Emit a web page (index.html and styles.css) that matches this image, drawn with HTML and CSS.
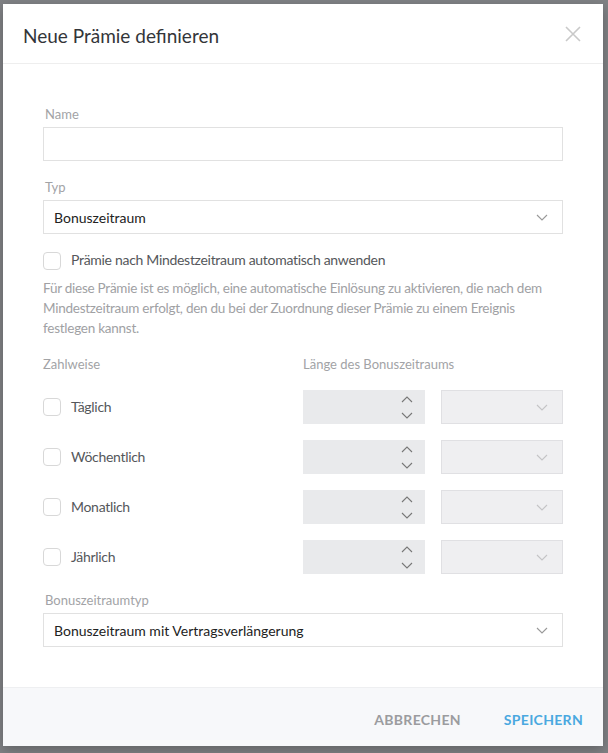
FILE: index.html
```html
<!DOCTYPE html>
<html lang="de">
<head>
<meta charset="utf-8">
<title>Neue Prämie definieren</title>
<link rel="stylesheet" href="styles.css">
</head>
<body>
<div class="modal">
  <div class="modal-header">
    <h1 class="modal-title">Neue Prämie definieren</h1>
    <button class="close" aria-label="Schließen">
      <svg width="16" height="16" viewBox="0 0 16 16"><path d="M1 1L15 15M15 1L1 15" stroke="#c9c9c9" stroke-width="1.6" fill="none"/></svg>
    </button>
  </div>
  <div class="modal-body">
    <label class="field-label">Name</label>
    <div class="input"></div>

    <label class="field-label gap">Typ</label>
    <div class="input select"><span>Bonuszeitraum</span><svg class="chev" width="12" height="7" viewBox="0 0 12 7"><path d="M1 1L6 6L11 1" stroke="#999" stroke-width="1.1" fill="none"/></svg></div>

    <div class="check-row top-check"><span class="box"></span><span class="check-text">Prämie nach Mindestzeitraum automatisch anwenden</span></div>
    <p class="desc">Für diese Prämie ist es möglich, eine automatische Einlösung zu aktivieren, die nach dem Mindestzeitraum erfolgt, den du bei der Zuordnung dieser Prämie zu einem Ereignis festlegen kannst.</p>

    <div class="grid">
      <div class="field-label">Zahlweise</div>
      <div class="field-label span2">Länge des Bonuszeitraums</div>

      <div class="check-row"><span class="box"></span><span class="check-text">Täglich</span></div>
      <div class="num"><span class="spin"><svg width="12" height="7" viewBox="0 0 12 7"><path d="M1 6L6 1L11 6" stroke="#777" stroke-width="1.1" fill="none"/></svg><svg width="12" height="7" viewBox="0 0 12 7"><path d="M1 1L6 6L11 1" stroke="#777" stroke-width="1.1" fill="none"/></svg></span></div>
      <div class="dis-select"><svg class="chev" width="12" height="7" viewBox="0 0 12 7"><path d="M1 1L6 6L11 1" stroke="#c4c4c6" stroke-width="1.1" fill="none"/></svg></div>

      <div class="check-row"><span class="box"></span><span class="check-text">Wöchentlich</span></div>
      <div class="num"><span class="spin"><svg width="12" height="7" viewBox="0 0 12 7"><path d="M1 6L6 1L11 6" stroke="#777" stroke-width="1.1" fill="none"/></svg><svg width="12" height="7" viewBox="0 0 12 7"><path d="M1 1L6 6L11 1" stroke="#777" stroke-width="1.1" fill="none"/></svg></span></div>
      <div class="dis-select"><svg class="chev" width="12" height="7" viewBox="0 0 12 7"><path d="M1 1L6 6L11 1" stroke="#c4c4c6" stroke-width="1.1" fill="none"/></svg></div>

      <div class="check-row"><span class="box"></span><span class="check-text">Monatlich</span></div>
      <div class="num"><span class="spin"><svg width="12" height="7" viewBox="0 0 12 7"><path d="M1 6L6 1L11 6" stroke="#777" stroke-width="1.1" fill="none"/></svg><svg width="12" height="7" viewBox="0 0 12 7"><path d="M1 1L6 6L11 1" stroke="#777" stroke-width="1.1" fill="none"/></svg></span></div>
      <div class="dis-select"><svg class="chev" width="12" height="7" viewBox="0 0 12 7"><path d="M1 1L6 6L11 1" stroke="#c4c4c6" stroke-width="1.1" fill="none"/></svg></div>

      <div class="check-row"><span class="box"></span><span class="check-text">Jährlich</span></div>
      <div class="num"><span class="spin"><svg width="12" height="7" viewBox="0 0 12 7"><path d="M1 6L6 1L11 6" stroke="#777" stroke-width="1.1" fill="none"/></svg><svg width="12" height="7" viewBox="0 0 12 7"><path d="M1 1L6 6L11 1" stroke="#777" stroke-width="1.1" fill="none"/></svg></span></div>
      <div class="dis-select"><svg class="chev" width="12" height="7" viewBox="0 0 12 7"><path d="M1 1L6 6L11 1" stroke="#c4c4c6" stroke-width="1.1" fill="none"/></svg></div>
    </div>

    <label class="field-label gap">Bonuszeitraumtyp</label>
    <div class="input select"><span>Bonuszeitraum mit Vertragsverlängerung</span><svg class="chev" width="12" height="7" viewBox="0 0 12 7"><path d="M1 1L6 6L11 1" stroke="#999" stroke-width="1.1" fill="none"/></svg></div>
  </div>
  <div class="modal-footer">
    <button class="btn cancel">Abbrechen</button>
    <button class="btn save">Speichern</button>
  </div>
</div>
</body>
</html>
```

FILE: styles.css
```css
* { box-sizing: border-box; }
html, body { margin: 0; padding: 0; }
body {
  background: #808285;
  font-family: "Lato", "Noto Sans", sans-serif;
  height: 753px;
  overflow: hidden;
}
.modal {
  margin: 4px 0 0 3px;
  width: 600px;
  height: 742px;
  background: #fff;
  display: flex;
  flex-direction: column;
  box-shadow: 0 4px 12px rgba(0,0,0,0.25);
}
.modal-header {
  display: flex;
  align-items: center;
  justify-content: space-between;
  height: 60px;
  padding: 4px 22px 0 20px;
  border-bottom: 1px solid #eeeeee;
}
.modal-title {
  margin: 0;
  font-size: 19px;
  font-weight: 400;
  color: #333539;
}
.close {
  border: 0;
  background: none;
  padding: 0;
  width: 16px;
  height: 16px;
  margin-top: -4px;
  display: flex;
}
.modal-body {
  flex: 1;
  padding: 41px 40px 0 40px;
  display: flex;
  flex-direction: column;
}
.field-label {
  display: block;
  font-size: 13px;
  line-height: 18px;
  color: #a2a3a6;
  padding-left: 2px;
  margin-bottom: 4px;
}
.field-label.gap { margin-top: 17px; }
.input {
  height: 34px;
  border: 1px solid #e1e1e1;
  background: #fff;
}
.select {
  display: flex;
  align-items: center;
  justify-content: space-between;
  padding: 0 14px 0 10px;
  font-size: 14px;
  color: #222;
}
.check-row {
  display: flex;
  align-items: center;
  gap: 10px;
  height: 18px;
}
.top-check { margin-top: 18px; }
.box {
  width: 18px;
  height: 18px;
  border: 1px solid #d8d8d8;
  border-radius: 4px;
  background: #fff;
  flex: none;
}
.check-text {
  font-size: 14px;
  line-height: 18px;
  letter-spacing: -0.3px;
  color: #55575b;
}
.top-check .check-text { margin-top: -2px; }
.desc {
  margin: 8px 0 0 0;
  font-size: 13.5px;
  letter-spacing: -0.25px;
  line-height: 20px;
  color: #a0a1a4;
}
.grid {
  margin-top: 17px;
  display: grid;
  grid-template-columns: 1fr 122px 122px;
  column-gap: 16px;
  row-gap: 16px;
  align-items: center;
}
.grid .field-label { margin-bottom: 1px; padding-left: 0; }
.span2 { grid-column: span 2; }
.num {
  height: 34px;
  background: #e9eaec;
  display: flex;
  justify-content: flex-end;
  align-items: center;
  padding-right: 12px;
}
.spin {
  display: flex;
  flex-direction: column;
  gap: 9px;
}
.dis-select {
  height: 34px;
  background: #efeff1;
  border: 1px solid #e0e0e3;
  display: flex;
  justify-content: flex-end;
  align-items: center;
  padding-right: 14px;
}
.modal-footer {
  height: 59px;
  background: #f7f8fa;
  border-top: 1px solid #eeeff1;
  display: flex;
  justify-content: flex-end;
  align-items: center;
  gap: 43px;
  padding: 5px 20px 0 0;
}
.btn {
  border: 0;
  background: none;
  padding: 0;
  font-family: inherit;
  font-size: 14px;
  font-weight: 700;
  text-transform: uppercase;
  letter-spacing: 0.3px;
}
.cancel { color: #9b9c9f; }
.save { color: #4aa8e0; }
```
